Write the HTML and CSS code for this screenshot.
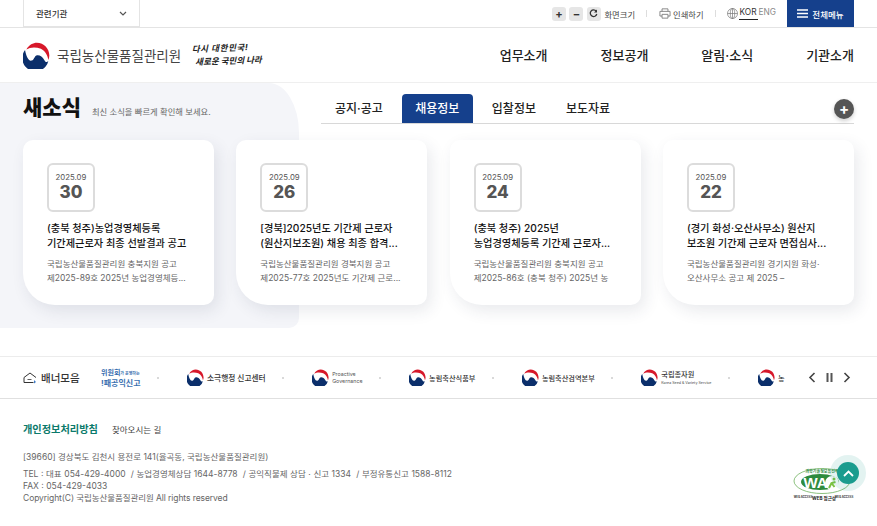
FILE: index.html
```html
<!DOCTYPE html>
<html lang="ko">
<head>
    <meta charset="UTF-8">
    <meta name="viewport" content="width=device-width, initial-scale=1.0">
    <title>국립농산물품질관리원</title>
    <link rel="stylesheet" href="styles.css">
</head>
<body>
    <svg class="defs" width="0" height="0">
        <symbol id="taegeuk" viewBox="0 0 40 40">
            <path fill="#0b2f6b" d="M3 12A19.5 19.5 0 1 0 37.5 28C35 31 33 29.5 31.5 26.5C29 22 25 19 21 19.5C17 20 17 26 13 27.5C8 29 5 22 3 12Z"/>
            <path fill="#d7182a" d="M5 11C9 4 15 1 20.5 1C31 1 39 9.5 39 20C39 22.5 38.5 24.5 37.5 26.5C36.5 20 33 13 26.5 10C19 7 10.5 7.5 5 11Z"/>
        </symbol>
    </svg>

    <div class="topbar">
        <div class="wrap topbar-in">
            <div class="select">관련기관
                <svg width="8" height="5" viewBox="0 0 8 5"><path d="M1 1l3 3 3-3" fill="none" stroke="#555" stroke-width="1.2"/></svg>
            </div>
            <div class="tools">
                <span class="zoom-btn">+</span>
                <span class="zoom-btn">−</span>
                <span class="zoom-btn">
                    <svg width="9" height="9" viewBox="0 0 9 9"><path d="M7.2 2.2A3.3 3.3 0 1 0 7.8 5" fill="none" stroke="#333" stroke-width="1.3"/><path d="M8 0.5v3h-3z" fill="#333"/></svg>
                </span>
                <span class="tool-text">화면크기</span>
                <span class="sep"></span>
                <svg class="print-ico" width="12" height="11" viewBox="0 0 14 13" fill="none" stroke="#777" stroke-width="1"><path d="M3.5 4V1h7v3M3.5 9.5H1V4h12v5.5h-2.5"/><path d="M3.5 7.5h7v4.5h-7z"/></svg>
                <span class="tool-text">인쇄하기</span>
                <span class="sep"></span>
                <svg class="globe-ico" width="11" height="11" viewBox="0 0 11 11" fill="none" stroke="#777" stroke-width="0.7"><circle cx="5.5" cy="5.5" r="5"/><ellipse cx="5.5" cy="5.5" rx="2.2" ry="5"/><path d="M0.5 5.5h10M5.5 0.5v10"/></svg>
                <span class="lang lang-on">KOR</span>
                <span class="lang">ENG</span>
                <a class="all-menu">
                    <svg width="11" height="9" viewBox="0 0 11 9"><path d="M0 1h11M0 4.5h11M0 8h11" stroke="#fff" stroke-width="1.3"/></svg>
                    전체메뉴
                </a>
            </div>
        </div>
    </div>

    <header class="header">
        <div class="wrap header-in">
            <div class="logo">
                <svg class="logo-mark" width="27" height="27"><use href="#taegeuk"/></svg>
                <span class="logo-name">국립농산물품질관리원</span>
                <span class="slogan"><span class="slogan-1">다시 대한민국!</span><br><span class="slogan-2">새로운 국민의 나라</span></span>
            </div>
            <nav class="gnb">
                <a>업무소개</a>
                <a>정보공개</a>
                <a>알림·소식</a>
                <a>기관소개</a>
            </nav>
        </div>
    </header>

    <main class="news">
        <div class="wrap">
            <div class="news-head">
                <div class="news-title">
                    <h2>새소식</h2>
                    <p>최신 소식을 빠르게 확인해 보세요.</p>
                </div>
                <div class="tabs">
                    <a class="tab">공지·공고</a>
                    <a class="tab tab-on">채용정보</a>
                    <a class="tab">입찰정보</a>
                    <a class="tab">보도자료</a>
                    <span class="more">+</span>
                </div>
            </div>
            <div class="cards">
                <article class="card">
                    <div class="date"><span>2025.09</span><b>30</b></div>
                    <h3>(충북 청주)농업경영체등록<br>기간제근로자 최종 선발결과 공고</h3>
                    <p>국립농산물품질관리원 충북지원 공고<br>제2025-89호 2025년 농업경영체등...</p>
                </article>
                <article class="card">
                    <div class="date"><span>2025.09</span><b>26</b></div>
                    <h3>[경북]2025년도 기간제 근로자<br>(원산지보조원) 채용 최종 합격...</h3>
                    <p>국립농산물품질관리원 경북지원 공고<br>제2025-77호 2025년도 기간제 근로...</p>
                </article>
                <article class="card">
                    <div class="date"><span>2025.09</span><b>24</b></div>
                    <h3>(충북 청주) 2025년<br>농업경영체등록 기간제 근로자...</h3>
                    <p>국립농산물품질관리원 충북지원 공고<br>제2025-86호 (충북 청주) 2025년 농</p>
                </article>
                <article class="card">
                    <div class="date"><span>2025.09</span><b>22</b></div>
                    <h3>(경기 화성·오산사무소) 원산지<br>보조원 기간제 근로자 면접심사...</h3>
                    <p>국립농산물품질관리원 경기지원 화성·<br>오산사무소 공고 제 2025 –</p>
                </article>
            </div>
        </div>
    </main>

    <section class="banners">
        <div class="wrap banners-in">
            <div class="banner-label">
                <svg width="14" height="12" viewBox="0 0 14 12" fill="none" stroke="#333" stroke-width="1"><path d="M1 10.5V5.5L7 1l6 4.5M1 10.5h9.5"/><path d="M4.5 7.5h4" stroke-width="0.8"/><path d="M11 8l2 2-2 1.5z" fill="#3d7cc9" stroke="none"/></svg>
                배너모음
            </div>
            <div class="banner-list">
                <div class="banner b-report"><span class="r1">위원회<small>가 운영하는</small></span><span class="r2">!패공익신고</span></div>
                <i class="dot"></i>
                <div class="banner"><svg width="17" height="17"><use href="#taegeuk"/></svg><span class="b-name">소극행정 신고센터</span></div>
                <i class="dot"></i>
                <div class="banner"><svg width="17" height="17"><use href="#taegeuk"/></svg><span class="b-en">Proactive<br>Governance</span></div>
                <i class="dot"></i>
                <div class="banner"><svg width="17" height="17"><use href="#taegeuk"/></svg><span class="b-name b-small">농림축산식품부</span></div>
                <i class="dot"></i>
                <div class="banner"><svg width="17" height="17"><use href="#taegeuk"/></svg><span class="b-name b-small">농림축산검역본부</span></div>
                <i class="dot"></i>
                <div class="banner"><svg width="17" height="17"><use href="#taegeuk"/></svg><span class="b-seed">국립종자원<small>Korea Seed &amp; Variety Service</small></span></div>
                <i class="dot"></i>
                <div class="banner"><svg width="17" height="17"><use href="#taegeuk"/></svg><span class="b-name b-small">농</span></div>
            </div>
            <div class="banner-ctrl">
                <svg width="8" height="11" viewBox="0 0 8 11"><path d="M6.5 1L2 5.5 6.5 10" fill="none" stroke="#444" stroke-width="1.6"/></svg>
                <svg width="7" height="9" viewBox="0 0 7 9"><path d="M0.5 0h2v9h-2zM4.5 0h2v9h-2z" fill="#555"/></svg>
                <svg width="8" height="11" viewBox="0 0 8 11"><path d="M1.5 1L6 5.5 1.5 10" fill="none" stroke="#444" stroke-width="1.6"/></svg>
            </div>
        </div>
    </section>

    <footer class="footer">
        <div class="wrap">
            <div class="foot-links">
                <a class="privacy">개인정보처리방침</a>
                <a>찾아오시는 길</a>
            </div>
            <div class="foot-row">
                <div class="foot-info">
                    <p class="addr">[39660] 경상북도 김천시 용전로 141(율곡동, 국립농산물품질관리원)</p>
                    <p class="tel">TEL : 대표 054-429-4000 &nbsp;/ 농업경영체상담 1644-8778 &nbsp;/ 공익직불제 상담 · 신고 1334 &nbsp;/ 부정유통신고 1588-8112</p>
                    <p>FAX : 054-429-4033</p>
                    <p class="copy">Copyright(C) 국립농산물품질관리원 All rights reserved</p>
                </div>
                <div class="wa-mark">
                    <svg width="62" height="36" viewBox="0 0 62 36">
                        <ellipse cx="29" cy="14" rx="28" ry="12.5" fill="#fff" stroke="#5aa648" stroke-width="0.7"/>
                        <ellipse cx="27" cy="15" rx="19" ry="8" fill="#2e8b3d"/>
                        <circle cx="39" cy="16" r="7" fill="#fff"/>
                        <path d="M36 21l2.5-5 4-1M38.5 16l3 4" fill="none" stroke="#7cc242" stroke-width="2"/>
                        <circle cx="41" cy="12" r="1.5" fill="#7cc242"/>
                        <text x="10.5" y="21" class="wa-text">WA</text>
                        <text x="29" y="6" class="wa-top" text-anchor="middle">과학기술정보통신부</text>
                        <text x="10" y="31" class="wa-bot" text-anchor="middle">WEB ACCESS</text>
                        <text x="31" y="32.5" class="wa-web" text-anchor="middle">WEB 접근성</text>
                        <text x="51" y="31" class="wa-bot" text-anchor="middle">WEB ACCESS</text>
                    </svg>
                </div>
            </div>
        </div>
    </footer>

    <a class="to-top">
        <svg width="11" height="7" viewBox="0 0 11 7"><path d="M1 6l4.5-4.5L10 6" fill="none" stroke="#fff" stroke-width="1.8"/></svg>
    </a>
</body>
</html>
```

FILE: styles.css
```css
* {
    box-sizing: border-box;
}
body {
    margin: 0;
    font-family: "Inter", "Noto Sans CJK KR", sans-serif;
    color: #222;
    background: #fff;
    overflow: hidden;
}
h2, h3, p {
    margin: 0;
}
.defs {
    display: block;
    height: 0;
}
.wrap {
    width: 831px;
    margin-left: 23px;
}

/* top bar */
.topbar {
    height: 28px;
    border-bottom: 1px solid #e4e4e4;
}
.topbar-in {
    display: flex;
    justify-content: space-between;
    height: 27px;
}
.select {
    width: 117px;
    height: 27px;
    padding: 0 12px;
    display: flex;
    align-items: center;
    justify-content: space-between;
    border: 1px solid #e4e4e4;
    border-top: 0;
    font-size: 8.5px;
    font-weight: 500;
    color: #333;
}
.tools {
    display: flex;
    align-items: center;
}
.zoom-btn {
    width: 14px;
    height: 14px;
    margin-right: 3.5px;
    display: flex;
    align-items: center;
    justify-content: center;
    background: #e6e6e6;
    border-radius: 3px;
    font-size: 11px;
    font-weight: 700;
    color: #333;
}
.tool-text {
    font-size: 8.3px;
    color: #444;
}
.sep {
    width: 1px;
    height: 7px;
    margin: 0 11px;
    background: #ddd;
}
.print-ico {
    margin: 0 2px 0 1px;
}
.globe-ico {
    margin-right: 1px;
}
.lang {
    align-self: flex-start;
    height: 20px;
    padding: 0 1px;
    line-height: 25px;
    font-size: 8.3px;
    color: #888;
}
.lang-on {
    color: #333;
    border-bottom: 1px solid #222;
}
.all-menu {
    width: 67px;
    height: 27px;
    margin-left: 10px;
    display: flex;
    align-items: center;
    justify-content: center;
    gap: 4px;
    background: #15408c;
    color: #fff;
    font-size: 8.5px;
    font-weight: 500;
}

/* header */
.header {
    height: 55px;
    border-bottom: 1px solid #efefef;
}
.header-in {
    height: 54px;
    display: flex;
    align-items: center;
    justify-content: space-between;
}
.logo {
    display: flex;
    align-items: center;
}
.logo-name {
    margin-left: 7px;
    font-size: 13.5px;
    color: #444;
}
.slogan {
    margin-left: 11px;
    font-size: 8.5px;
    line-height: 13px;
    font-weight: 700;
    font-style: italic;
    color: #222;
    transform: rotate(-2deg);
}
.slogan-1 {
    letter-spacing: 0.6px;
}
.slogan-2 {
    padding-left: 3px;
}
.gnb {
    display: flex;
    gap: 53px;
    padding-bottom: 2px;
    font-size: 13px;
    font-weight: 500;
    color: #222;
}

/* news */
.news {
    position: relative;
    height: 273px;
    padding-top: 11px;
}
.news::before {
    content: "";
    position: absolute;
    left: 0;
    top: 0;
    width: 299px;
    height: 245px;
    background: #f4f5f9;
    border-radius: 0 30px 10px 0 / 0 50px 10px 0;
}
.news .wrap {
    position: relative;
}
.news-head {
    display: flex;
    justify-content: space-between;
    height: 46px;
}
.news-title {
    height: 28px;
    display: flex;
    align-items: center;
    gap: 11px;
}
.news-title h2 {
    font-size: 21px;
    font-weight: 900;
    line-height: 28px;
    color: #111;
}
.news-title p {
    padding-top: 6px;
    font-size: 8.3px;
    color: #666;
}
.tabs {
    width: 533px;
    height: 30px;
    padding-left: 3px;
    display: flex;
    align-items: flex-end;
    border-bottom: 1px solid #d8d8d8;
    position: relative;
}
.tab {
    height: 29px;
    padding: 0 11px;
    margin-right: 8px;
    line-height: 30px;
    font-size: 12px;
    font-weight: 500;
    color: #222;
}
.tab-on {
    width: 71px;
    padding: 0;
    text-align: center;
    background: #15408c;
    color: #fff;
    border-radius: 4px 4px 0 0;
}
.more {
    position: absolute;
    right: 0;
    top: 5px;
    width: 20px;
    height: 20px;
    border-radius: 50%;
    background: #555;
    color: #fff;
    font-size: 15px;
    line-height: 19px;
    font-weight: 700;
    text-align: center;
    box-shadow: 0 2px 4px rgba(0, 0, 0, 0.2);
}
.cards {
    display: flex;
    justify-content: space-between;
}
.card {
    width: 191px;
    height: 165px;
    padding: 23px 0 0 24px;
    background: #fff;
    border-radius: 10px 10px 10px 32px;
    box-shadow: 4px 6px 16px rgba(40, 50, 80, 0.1);
}
.date {
    width: 48px;
    height: 49px;
    display: flex;
    flex-direction: column;
    align-items: center;
    padding-top: 6px;
    border: 2.5px solid #dcdcdc;
    border-radius: 6px;
    color: #555;
}
.date span {
    font-size: 7.8px;
    line-height: 12px;
}
.date b {
    font-size: 17px;
    line-height: 18px;
    font-weight: 800;
}
.card h3 {
    margin-top: 9px;
    font-size: 10.2px;
    line-height: 15px;
    font-weight: 500;
    color: #111;
    white-space: nowrap;
}
.card p {
    margin-top: 7px;
    font-size: 8.5px;
    line-height: 13.5px;
    color: #666;
    white-space: nowrap;
}

/* banner strip */
.banners {
    height: 43px;
    border-top: 1px solid #ececec;
    border-bottom: 1px solid #e0e0e0;
}
.banners-in {
    height: 41px;
    display: flex;
    align-items: center;
}
.banner-label {
    width: 78px;
    display: flex;
    align-items: center;
    gap: 4px;
    font-size: 10.5px;
    font-weight: 500;
    color: #333;
}
.banner-list {
    width: 685px;
    overflow: hidden;
    display: flex;
    align-items: center;
    white-space: nowrap;
}
.banner {
    display: flex;
    align-items: center;
    gap: 3px;
    flex: none;
}
.dot {
    flex: none;
    width: 2px;
    height: 2px;
    margin: 0 28px 0 16.5px;
    background: #ccc;
    border-radius: 50%;
}
.b-report {
    flex-direction: column;
    align-items: flex-start;
    gap: 0;
    color: #3a6fb0;
}
.r1 {
    font-size: 7px;
    line-height: 9px;
    font-weight: 700;
}
.r1 small {
    font-size: 4px;
}
.r2 {
    font-size: 8px;
    line-height: 10px;
    font-weight: 700;
}
.b-name {
    font-size: 7.7px;
    font-weight: 500;
    color: #333;
}
.b-small {
    font-size: 7.2px;
}
.b-en {
    font-size: 5.3px;
    line-height: 7px;
    color: #555;
}
.b-seed {
    display: flex;
    flex-direction: column;
    font-size: 7.2px;
    line-height: 11px;
    font-weight: 500;
    color: #333;
}
.b-seed small {
    font-size: 3.6px;
    line-height: 6px;
    color: #666;
}
.banner-ctrl {
    margin-left: auto;
    display: flex;
    align-items: center;
    gap: 10px;
    padding-right: 3px;
}

/* footer */
.footer {
    padding-top: 22px;
}
.foot-links {
    display: flex;
    align-items: baseline;
    gap: 14px;
    font-size: 8.5px;
    color: #444;
}
.privacy {
    font-size: 10.2px;
    font-weight: 700;
    color: #0b7a6b;
}
.foot-row {
    display: flex;
    justify-content: space-between;
}
.foot-info {
    padding-top: 15px;
    font-size: 8.5px;
    line-height: 12px;
    color: #666;
}
.foot-info .addr {
    margin-bottom: 5px;
}
.foot-info .tel {
    word-spacing: 0.2px;
}
.foot-info .copy {
    letter-spacing: -0.08px;
}
.wa-mark {
    margin: 31px -1px 0 0;
}
.wa-text {
    font-size: 15px;
    font-weight: 800;
    fill: #fff;
    font-family: "Liberation Sans", sans-serif;
}
.wa-top {
    font-size: 4px;
    fill: #2e8b3d;
    font-weight: 700;
}
.wa-web {
    font-size: 4.5px;
    font-weight: 700;
    fill: #222;
}
.wa-bot {
    font-size: 2.8px;
    font-weight: 700;
    fill: #333;
}
.to-top {
    position: absolute;
    left: 837px;
    top: 462px;
    width: 22px;
    height: 22px;
    display: flex;
    align-items: center;
    justify-content: center;
    border-radius: 50%;
    background: #1a9c8e;
    box-shadow: 0 0 0 7px rgba(26, 156, 142, 0.12);
}
```
